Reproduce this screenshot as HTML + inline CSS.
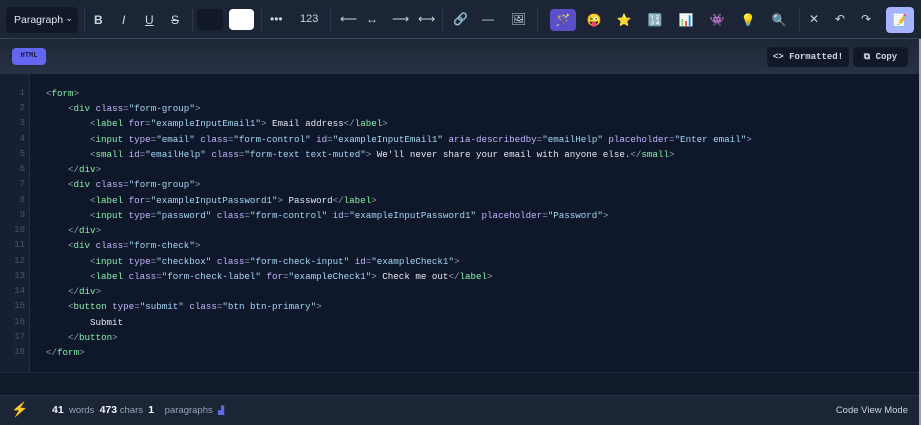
<!DOCTYPE html><html><head><style>
*{margin:0;padding:0;box-sizing:border-box}
body{width:921px;height:425px;background:#111827;font-family:"Liberation Sans",sans-serif;overflow:hidden;position:relative}
.tb{position:absolute;left:0;top:0;width:921px;height:39px;background:#1c2535;border-bottom:1px solid #3a4658}
.ab{position:absolute;color:#cbd5e1;font-size:12px;line-height:1}
.sep{position:absolute;top:8px;width:1px;height:24px;background:#2e3a4c}
.hdr{position:absolute;left:0;top:39px;width:921px;height:35px;background:linear-gradient(#1e2737,#273244)}
.code{position:absolute;left:0;top:74px;width:919px;height:298px;background:#0f172a}
.gut{position:absolute;left:0;top:0;width:30px;height:298px;background:#172033;border-right:1px solid #232e42}
.ln{position:absolute;left:0;width:25px;text-align:right;font:9px "Liberation Mono",monospace;color:#4b5567}
.cl{position:absolute;font:9.2px "Liberation Mono",monospace;color:#e2e8f0;white-space:pre}
.t{color:#86efac}.a{color:#c4b5fd}.s{color:#a5d8f3}.p{color:#94a3b8}
.foot{position:absolute;left:0;top:395px;width:919px;height:30px;background:#1c2535;border-top:1px solid #2a3446}
.btn{position:absolute;top:47px;height:20px;background:#111827;border-radius:4px;color:#d1d5db;font:bold 9px "Liberation Mono",monospace;line-height:20px;text-align:center}
.ic{position:absolute;top:9px;width:26px;height:22px;border-radius:4px;text-align:center;font-size:12px;line-height:22px}
</style></head><body>
<div class="tb">
 <div style="position:absolute;left:6px;top:7px;width:72px;height:26px;background:#111827;border-radius:5px;color:#e2e8f0;font-size:10.5px;line-height:26px;padding-left:8px">Paragraph<span style="position:absolute;right:5px;top:-2px;font-size:9px">&#8964;</span></div>
 <div class="sep" style="left:84px"></div>
 <div class="ab" style="left:94px;top:14px;font-weight:bold">B</div>
 <div class="ab" style="left:122px;top:14px;font-style:italic">I</div>
 <div class="ab" style="left:145px;top:14px;text-decoration:underline">U</div>
 <div class="ab" style="left:171px;top:14px;text-decoration:line-through">S</div>
 <div class="sep" style="left:192px"></div>
 <div style="position:absolute;left:197px;top:9px;width:26px;height:21px;background:#111827;border-radius:4px"></div>
 <div style="position:absolute;left:229px;top:9px;width:25px;height:21px;background:#fff;border-radius:4px"></div>
 <div class="sep" style="left:261px"></div>
 <div class="ab" style="left:270px;top:13px">•••</div>
 <div class="ab" style="left:300px;top:14px;font-size:11px">123</div>
 <div class="sep" style="left:330px"></div>
 <div class="ab" style="left:340px;top:13px">⟵</div>
 <div class="ab" style="left:366px;top:13px">↔</div>
 <div class="ab" style="left:392px;top:13px">⟶</div>
 <div class="ab" style="left:418px;top:13px">⟷</div>
 <div class="sep" style="left:442px"></div>
 <div class="ab" style="left:453px;top:13px">🔗</div>
 <div class="ab" style="left:482px;top:13px">—</div>
 <div class="ab" style="left:511px;top:13px">🖼</div>
 <div class="sep" style="left:537px"></div>
 <div class="ic" style="left:550px;background:#5b4fc9;width:26px">🪄</div>
 <div class="ic" style="left:581px">😜</div>
 <div class="ic" style="left:611px">⭐</div>
 <div class="ic" style="left:642px">🔢</div>
 <div class="ic" style="left:673px">📊</div>
 <div class="ic" style="left:704px">👾</div>
 <div class="ic" style="left:735px">💡</div>
 <div class="ic" style="left:766px">🔍</div>
 <div class="sep" style="left:799px"></div>
 <div class="ab" style="left:809px;top:13px">✕</div>
 <div class="ab" style="left:835px;top:13px">↶</div>
 <div class="ab" style="left:861px;top:13px">↷</div>
 <div class="ic" style="left:886px;top:7px;width:28px;height:26px;background:#a5b4fc;line-height:26px">📝</div>
</div>
<div class="hdr">
 <div style="position:absolute;left:12px;top:9px;width:34px;height:17px;background:#6366f1;border-radius:4px;color:#1e1b4b;font:bold 7px 'Liberation Mono',monospace;line-height:17px;text-align:center">HTML</div>
</div>
<div class="btn" style="left:767px;width:82px">&lt;&gt; Formatted!</div>
<div class="btn" style="left:853px;width:55px">⧉ Copy</div>
<div class="code"><div class="gut"></div>
<div class="ln" style="top:14px">1</div><div class="ln" style="top:29px">2</div><div class="ln" style="top:44px">3</div><div class="ln" style="top:60px">4</div><div class="ln" style="top:75px">5</div><div class="ln" style="top:90px">6</div><div class="ln" style="top:105px">7</div><div class="ln" style="top:121px">8</div><div class="ln" style="top:136px">9</div><div class="ln" style="top:151px">10</div><div class="ln" style="top:166px">11</div><div class="ln" style="top:182px">12</div><div class="ln" style="top:197px">13</div><div class="ln" style="top:212px">14</div><div class="ln" style="top:227px">15</div><div class="ln" style="top:243px">16</div><div class="ln" style="top:258px">17</div><div class="ln" style="top:273px">18</div>
<div class="cl" style="left:46px;top:14px"><span class="p">&lt;</span><span class="t">form</span><span class="p">&gt;</span></div>
<div class="cl" style="left:68px;top:29px"><span class="p">&lt;</span><span class="t">div</span> <span class="a">class</span><span class="p">=</span><span class="s">"form-group"</span><span class="p">&gt;</span></div>
<div class="cl" style="left:90px;top:44px"><span class="p">&lt;</span><span class="t">label</span> <span class="a">for</span><span class="p">=</span><span class="s">"exampleInputEmail1"</span><span class="p">&gt;</span> Email address<span class="p">&lt;/</span><span class="t">label</span><span class="p">&gt;</span></div>
<div class="cl" style="left:90px;top:60px"><span class="p">&lt;</span><span class="t">input</span> <span class="a">type</span><span class="p">=</span><span class="s">"email"</span> <span class="a">class</span><span class="p">=</span><span class="s">"form-control"</span> <span class="a">id</span><span class="p">=</span><span class="s">"exampleInputEmail1"</span> <span class="a">aria-describedby</span><span class="p">=</span><span class="s">"emailHelp"</span> <span class="a">placeholder</span><span class="p">=</span><span class="s">"Enter email"</span><span class="p">&gt;</span></div>
<div class="cl" style="left:90px;top:75px"><span class="p">&lt;</span><span class="t">small</span> <span class="a">id</span><span class="p">=</span><span class="s">"emailHelp"</span> <span class="a">class</span><span class="p">=</span><span class="s">"form-text text-muted"</span><span class="p">&gt;</span> We'll never share your email with anyone else.<span class="p">&lt;/</span><span class="t">small</span><span class="p">&gt;</span></div>
<div class="cl" style="left:68px;top:90px"><span class="p">&lt;/</span><span class="t">div</span><span class="p">&gt;</span></div>
<div class="cl" style="left:68px;top:105px"><span class="p">&lt;</span><span class="t">div</span> <span class="a">class</span><span class="p">=</span><span class="s">"form-group"</span><span class="p">&gt;</span></div>
<div class="cl" style="left:90px;top:121px"><span class="p">&lt;</span><span class="t">label</span> <span class="a">for</span><span class="p">=</span><span class="s">"exampleInputPassword1"</span><span class="p">&gt;</span> Password<span class="p">&lt;/</span><span class="t">label</span><span class="p">&gt;</span></div>
<div class="cl" style="left:90px;top:136px"><span class="p">&lt;</span><span class="t">input</span> <span class="a">type</span><span class="p">=</span><span class="s">"password"</span> <span class="a">class</span><span class="p">=</span><span class="s">"form-control"</span> <span class="a">id</span><span class="p">=</span><span class="s">"exampleInputPassword1"</span> <span class="a">placeholder</span><span class="p">=</span><span class="s">"Password"</span><span class="p">&gt;</span></div>
<div class="cl" style="left:68px;top:151px"><span class="p">&lt;/</span><span class="t">div</span><span class="p">&gt;</span></div>
<div class="cl" style="left:68px;top:166px"><span class="p">&lt;</span><span class="t">div</span> <span class="a">class</span><span class="p">=</span><span class="s">"form-check"</span><span class="p">&gt;</span></div>
<div class="cl" style="left:90px;top:182px"><span class="p">&lt;</span><span class="t">input</span> <span class="a">type</span><span class="p">=</span><span class="s">"checkbox"</span> <span class="a">class</span><span class="p">=</span><span class="s">"form-check-input"</span> <span class="a">id</span><span class="p">=</span><span class="s">"exampleCheck1"</span><span class="p">&gt;</span></div>
<div class="cl" style="left:90px;top:197px"><span class="p">&lt;</span><span class="t">label</span> <span class="a">class</span><span class="p">=</span><span class="s">"form-check-label"</span> <span class="a">for</span><span class="p">=</span><span class="s">"exampleCheck1"</span><span class="p">&gt;</span> Check me out<span class="p">&lt;/</span><span class="t">label</span><span class="p">&gt;</span></div>
<div class="cl" style="left:68px;top:212px"><span class="p">&lt;/</span><span class="t">div</span><span class="p">&gt;</span></div>
<div class="cl" style="left:68px;top:227px"><span class="p">&lt;</span><span class="t">button</span> <span class="a">type</span><span class="p">=</span><span class="s">"submit"</span> <span class="a">class</span><span class="p">=</span><span class="s">"btn btn-primary"</span><span class="p">&gt;</span></div>
<div class="cl" style="left:90px;top:243px">Submit</div>
<div class="cl" style="left:68px;top:258px"><span class="p">&lt;/</span><span class="t">button</span><span class="p">&gt;</span></div>
<div class="cl" style="left:46px;top:273px"><span class="p">&lt;/</span><span class="t">form</span><span class="p">&gt;</span></div>
</div>
<div style="position:absolute;left:0;top:372px;width:919px;height:23px;background:#111a2b;border-top:1px solid #1f2a3d"></div>
<div class="foot">
 <div style="position:absolute;left:11px;top:5px;font-size:14px;color:#facc15">⚡</div>
 <div style="position:absolute;left:52px;top:8px;font-size:9.5px;color:#94a3b8;white-space:pre"><b style="color:#f1f5f9;font-size:10.5px">41</b>  words  <b style="color:#f1f5f9;font-size:10.5px">473</b> chars  <b style="color:#f1f5f9;font-size:10.5px">1</b>    paragraphs  <span style="color:#6366f1;font-size:8px">▟</span></div>
 <div style="position:absolute;right:11px;top:9px;font-size:9.5px;color:#cbd5e1">Code View Mode</div>
</div>
<div style="position:absolute;left:919px;top:39px;width:2px;height:386px;background:#9ca3af"></div>
</body></html>
